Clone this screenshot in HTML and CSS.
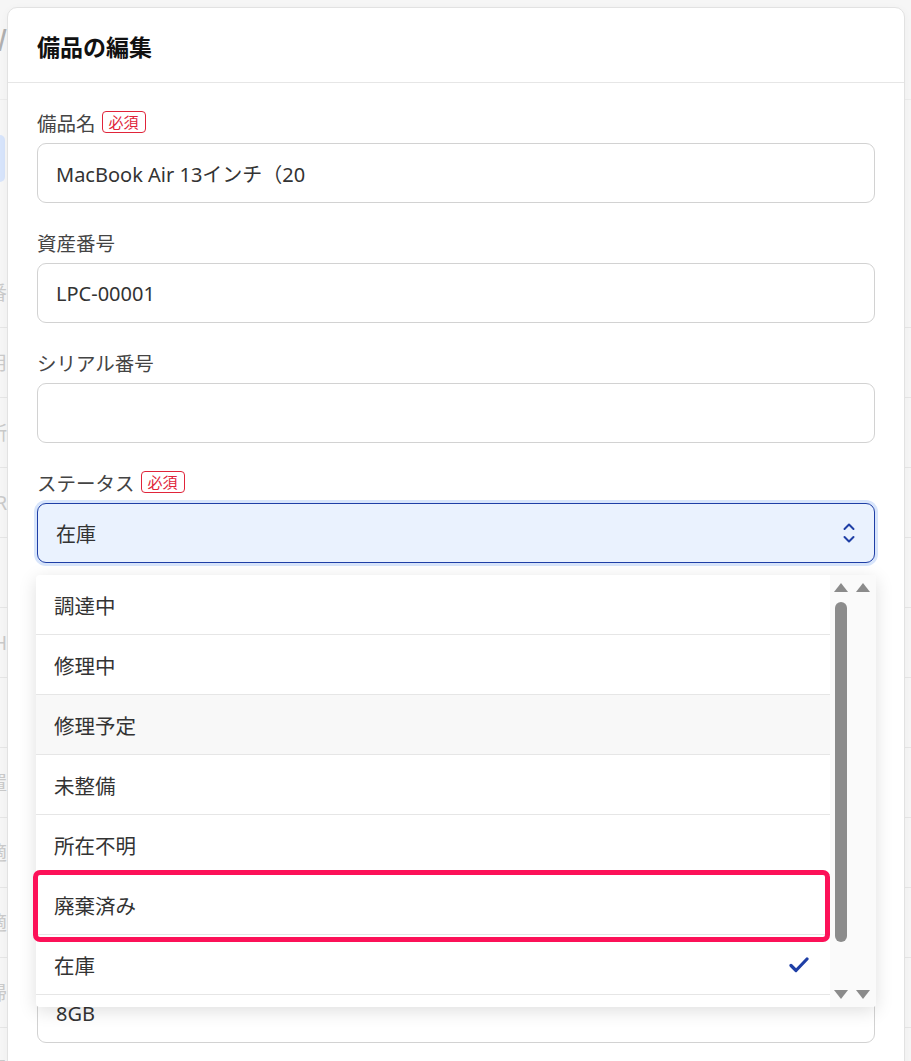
FILE: index.html
```html
<!DOCTYPE html>
<html lang="ja">
<head>
    <meta charset="UTF-8">
    <meta name="viewport" content="width=device-width, initial-scale=1.0">
    <title>備品の編集</title>
    <link rel="stylesheet" href="styles.css">
</head>
<body>
    <div class="backdrop">
        <div class="bg-top"><span class="bg-clip bg-logo">NW</span></div>
        <div class="bg-nav"><span class="bg-pill"></span></div>
        <div class="bg-table">
            <div class="bg-row"><span class="bg-clip">管理番</span></div>
            <div class="bg-row"><span class="bg-clip">使用</span></div>
            <div class="bg-row"><span class="bg-clip">場所</span></div>
            <div class="bg-row"><span class="bg-clip">PR</span></div>
            <div class="bg-row"><span class="bg-clip"></span></div>
            <div class="bg-row"><span class="bg-clip">PH</span></div>
            <div class="bg-row"><span class="bg-clip"></span></div>
            <div class="bg-row"><span class="bg-clip">設置</span></div>
            <div class="bg-row"><span class="bg-clip">適</span></div>
            <div class="bg-row"><span class="bg-clip">適</span></div>
            <div class="bg-row"><span class="bg-clip">帰</span></div>
            <div class="bg-row"><span class="bg-clip">上</span></div>
        </div>
    </div>

    <div class="modal">
        <header class="modal-head">
            <h2>備品の編集</h2>
        </header>

        <div class="modal-body">
            <div class="field">
                <label class="field-label">備品名<span class="req">必須</span></label>
                <input class="text-input" type="text" value="MacBook Air 13インチ（20">
            </div>
            <div class="field">
                <label class="field-label">資産番号</label>
                <input class="text-input" type="text" value="LPC-00001">
            </div>
            <div class="field">
                <label class="field-label">シリアル番号</label>
                <input class="text-input" type="text" value="">
            </div>
            <div class="field">
                <label class="field-label">ステータス<span class="req">必須</span></label>
                <div class="select is-open">
                    <span>在庫</span>
                    <svg class="select-icon" width="14" height="24" viewBox="0 0 14 24" fill="none" stroke="currentColor" stroke-width="2" stroke-linecap="round" stroke-linejoin="round">
                        <polyline points="2.5,8 7,3.5 11.5,8"></polyline>
                        <polyline points="2.5,16 7,20.5 11.5,16"></polyline>
                    </svg>
                </div>
            </div>
            <div class="field">
                <label class="field-label">カテゴリ</label>
                <input class="text-input" type="text" value="ノートPC">
            </div>
            <div class="field">
                <label class="field-label">メーカー</label>
                <input class="text-input" type="text" value="Apple">
            </div>
            <div class="field">
                <label class="field-label">CPU</label>
                <input class="text-input" type="text" value="Apple M1">
            </div>
            <div class="field">
                <label class="field-label">メモリ</label>
                <input class="text-input" type="text" value="8GB">
            </div>
        </div>

        <!-- status dropdown (open) -->
        <div class="dropdown">
            <ul class="option-list">
                <li class="option">調達中</li>
                <li class="option">修理中</li>
                <li class="option is-hover">修理予定</li>
                <li class="option">未整備</li>
                <li class="option">所在不明</li>
                <li class="option">廃棄済み</li>
                <li class="option is-selected">在庫
                    <svg class="check" width="20" height="18" viewBox="0 0 20 18" fill="none" stroke="currentColor" stroke-width="3.2" stroke-linecap="round" stroke-linejoin="round">
                        <polyline points="2,9.5 7,14.5 18,3"></polyline>
                    </svg>
                </li>
                <li class="option">貸出中</li>
            </ul>
            <div class="scrollbar">
                <div class="sb-arrows">
                    <span class="tri-up"></span><span class="tri-up"></span>
                </div>
                <div class="sb-thumb"></div>
                <div class="sb-arrows sb-bottom">
                    <span class="tri-down"></span><span class="tri-down"></span>
                </div>
            </div>
        </div>

        <div class="highlight"></div>
    </div>
</body>
</html>
```

FILE: styles.css
```css
* {
    box-sizing: border-box;
}
body {
    font-family: "Noto Sans", "Noto Sans CJK JP", sans-serif;
    margin: 0;
    height: 1061px;
    overflow: hidden;
    background-color: #f6f6f6;
    color: #333;
}

/* page behind the modal */
.backdrop {
    width: 100%;
}
.bg-top {
    height: 100px;
    padding-top: 24px;
    border-bottom: 1px solid #ececec;
}
.bg-clip {
    display: flex;
    justify-content: flex-end;
    width: 7px;
    overflow: hidden;
    white-space: nowrap;
    color: #cacaca;
    font-size: 19px;
    line-height: 26px;
}
.bg-logo {
    font-size: 30px;
    line-height: 32px;
    color: #b0b0b0;
}
.bg-nav {
    height: 158px;
    padding-top: 35px;
}
.bg-pill {
    display: block;
    width: 5px;
    height: 47px;
    background-color: #d7e4fb;
    border-radius: 0 6px 6px 0;
}
.bg-row {
    height: 70px;
    padding-top: 22px;
    border-bottom: 1px solid #e6e6e6;
}

/* modal */
.modal {
    position: absolute;
    left: 7px;
    top: 7px;
    width: 898px;
    height: 1100px;
    background-color: #fff;
    border: 1px solid #e2e2e2;
    border-radius: 10px;
    box-shadow: 0 2px 10px rgba(0, 0, 0, 0.04);
}
.modal-head {
    height: 75px;
    padding: 0 29px;
    display: flex;
    align-items: center;
    border-bottom: 1px solid #e6e6e6;
}
.modal-head h2 {
    margin: 2px 0 0;
    font-size: 23px;
    font-weight: 700;
    color: #111;
}
.modal-body {
    padding: 26px 29px 0;
}
.field {
    margin-bottom: 26px;
}
.field-label {
    display: flex;
    align-items: center;
    height: 26px;
    margin-bottom: 8px;
    font-size: 19.5px;
    color: #444;
}
.req {
    margin-left: 6px;
    padding: 0 6px;
    height: 22px;
    line-height: 20px;
    font-size: 15px;
    color: #e0243a;
    border: 1px solid #e0243a;
    border-radius: 4px;
}
.text-input {
    display: block;
    width: 100%;
    height: 60px;
    padding: 0 18px;
    font-family: inherit;
    font-size: 20px;
    color: #333;
    background-color: #fff;
    border: 1px solid #d2d2d2;
    border-radius: 9px;
    outline: none;
}
.select {
    display: flex;
    align-items: center;
    justify-content: space-between;
    height: 60px;
    padding: 0 18px;
    font-size: 20px;
    color: #333;
    border: 1px solid #d2d2d2;
    border-radius: 9px;
}
.select.is-open {
    background-color: #eaf2fe;
    border: 1.5px solid #1f3fa6;
    box-shadow: 0 0 0 3px #d8e5fb;
}
.select-icon {
    color: #1f3fa6;
}

/* open dropdown */
.dropdown {
    position: absolute;
    left: 28px;
    top: 567px;
    width: 840px;
    height: 432px;
    display: flex;
    background-color: #fff;
    border-radius: 4px;
    box-shadow: 0 4px 18px rgba(0, 0, 0, 0.13);
    overflow: hidden;
    z-index: 10;
}
.option-list {
    flex: 1;
    list-style: none;
    margin: 0;
    padding: 0;
    overflow: hidden;
}
.option {
    display: flex;
    align-items: center;
    justify-content: space-between;
    height: 60px;
    padding: 0 21px 0 18px;
    font-size: 20.5px;
    color: #333;
    border-bottom: 1px solid #e6e6e6;
}
.option.is-hover {
    background-color: #f8f8f8;
}
.check {
    color: #1f3fa6;
}
.scrollbar {
    width: 46px;
    display: flex;
    flex-direction: column;
    background-color: #fafafa;
}
.sb-arrows {
    display: flex;
    gap: 8px;
    padding: 8px 0 0 4px;
}
.sb-bottom {
    margin-top: auto;
    padding: 0 0 8px 4px;
}
.tri-up {
    width: 0;
    height: 0;
    border-left: 7px solid transparent;
    border-right: 7px solid transparent;
    border-bottom: 9px solid #8b8b8b;
}
.tri-down {
    width: 0;
    height: 0;
    border-left: 7px solid transparent;
    border-right: 7px solid transparent;
    border-top: 9px solid #8b8b8b;
}
.sb-thumb {
    width: 12px;
    height: 340px;
    margin: 10px 0 0 5px;
    background-color: #8c8c8c;
    border-radius: 6px;
}

/* annotation box */
.highlight {
    position: absolute;
    left: 25px;
    top: 862px;
    width: 797px;
    height: 72px;
    border: 5px solid #fc1158;
    border-radius: 7px;
    z-index: 20;
}
```
